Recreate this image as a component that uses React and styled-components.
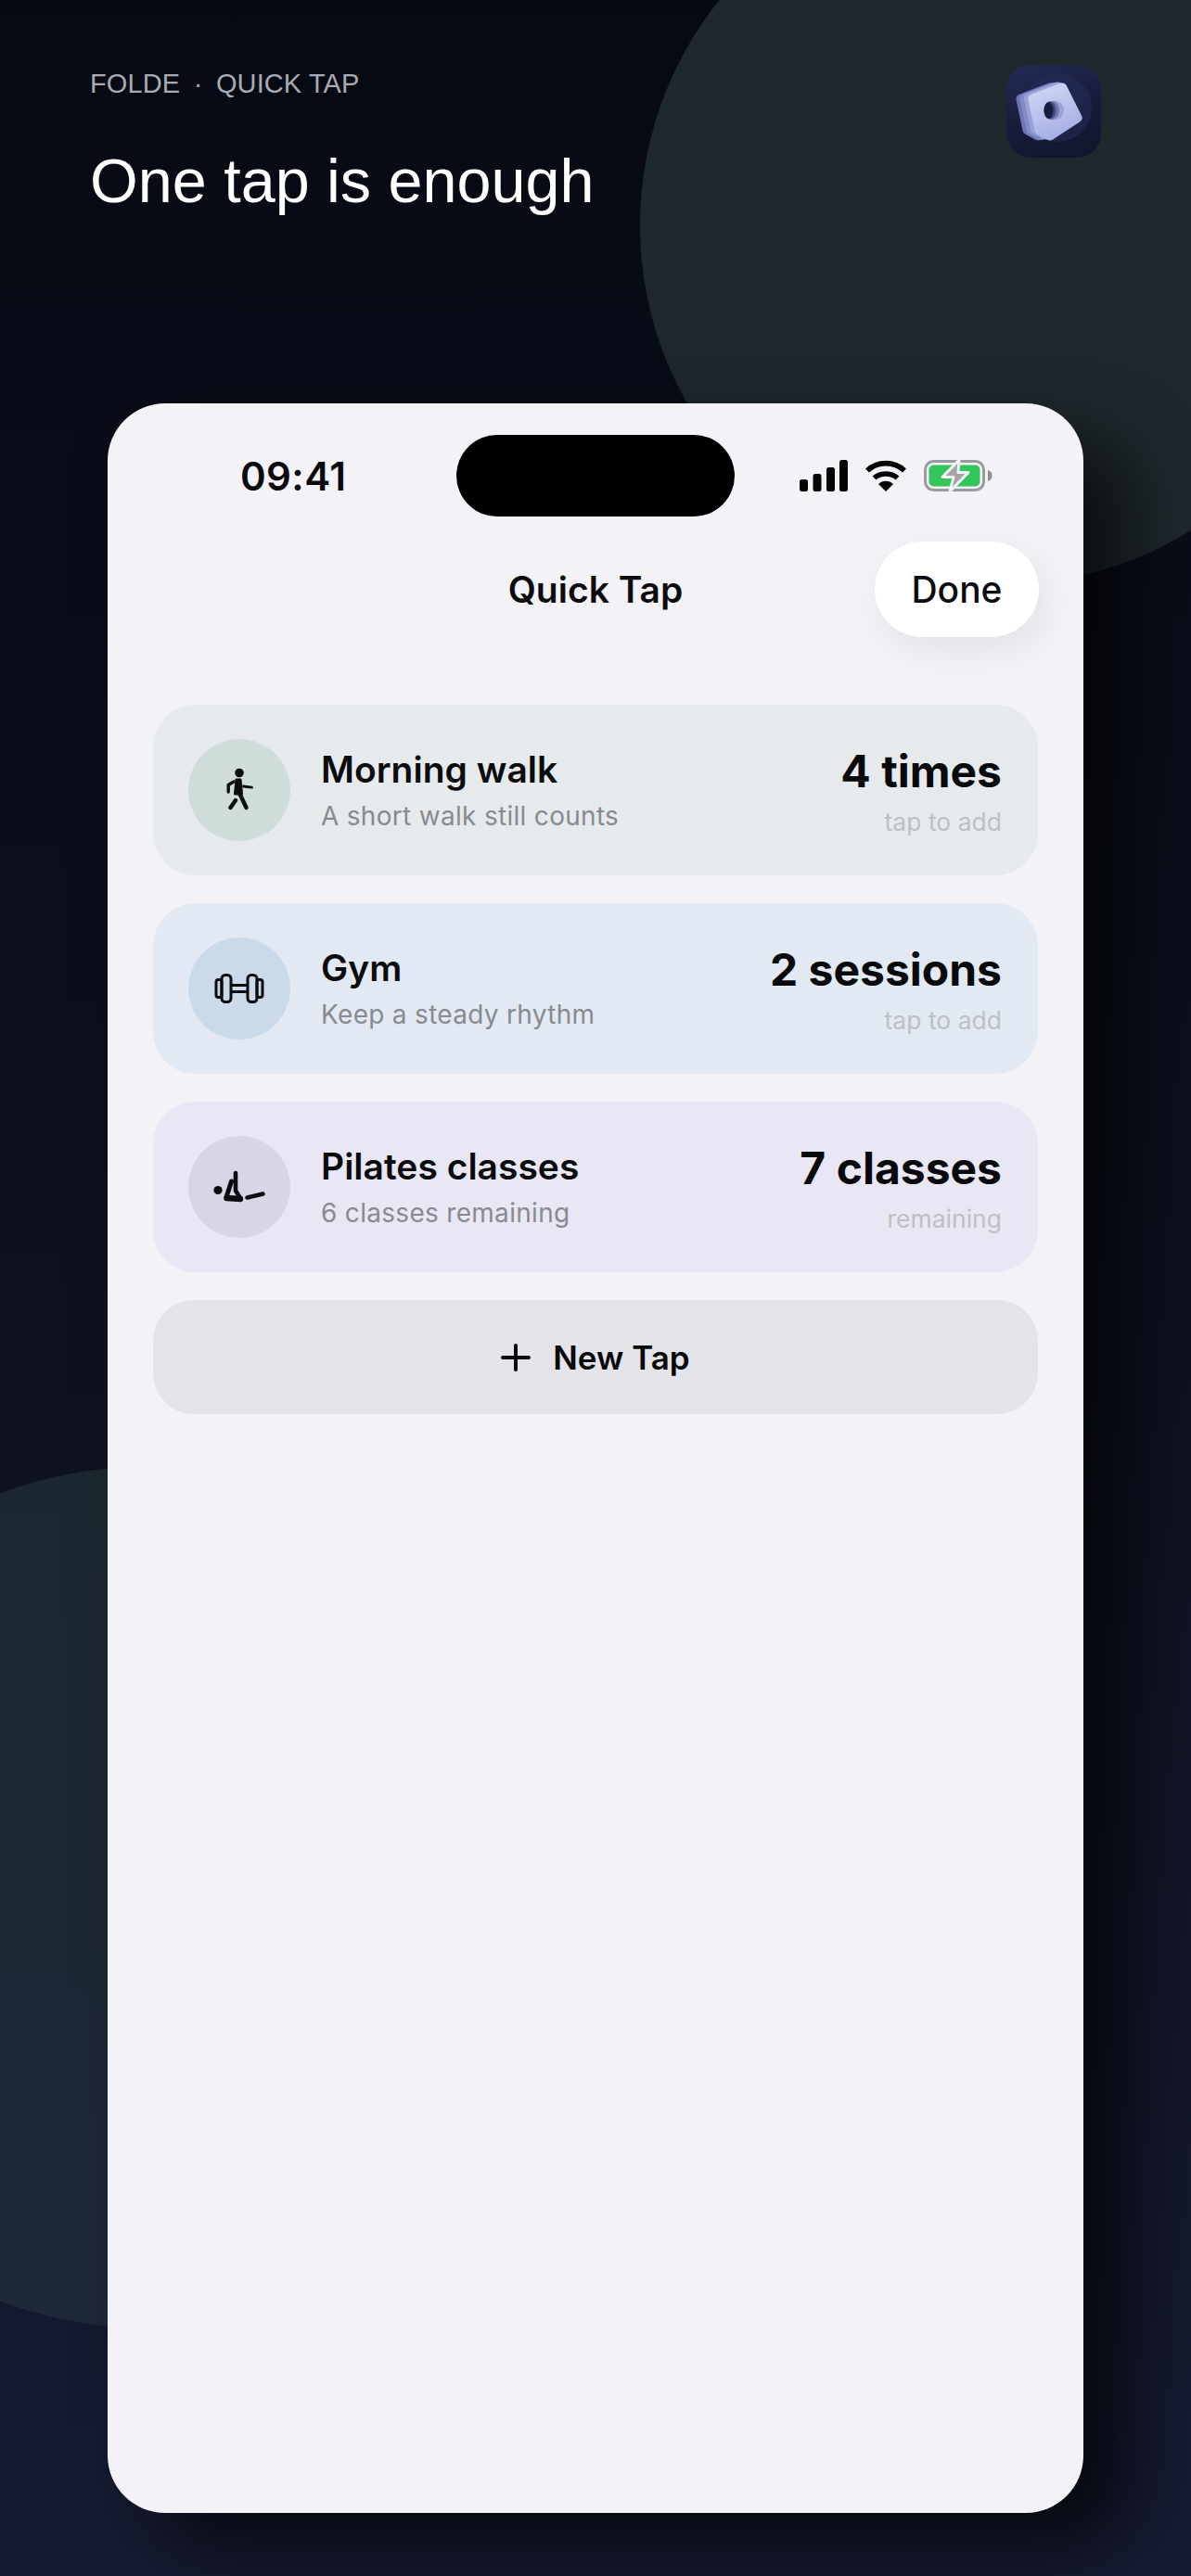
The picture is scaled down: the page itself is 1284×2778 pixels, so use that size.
import React from "react";
import styled, { createGlobalStyle } from "styled-components";

const GlobalStyle = createGlobalStyle`
  html, body {
    margin: 0;
    padding: 0;
    background: #0a0d16;
  }
`;

const Page = styled.div`
  position: relative;
  width: 1284px;
  height: 2778px;
  overflow: hidden;
  background: linear-gradient(180deg, #070a13 0%, #0d111e 50%, #161b31 100%);
`;

const Blob = styled.div`
  position: absolute;
  border-radius: 50%;
  left: ${(p) => p.$left}px;
  top: ${(p) => p.$top}px;
  width: ${(p) => p.$size}px;
  height: ${(p) => p.$size}px;
  background: ${(p) => p.$color};
`;

const Header = styled.header`
  position: relative;
  height: 435px;
  box-sizing: border-box;
  padding: 70px 97px 0 97px;
  display: flex;
  justify-content: space-between;
  align-items: flex-start;
`;

const HeaderText = styled.div`
  display: flex;
  flex-direction: column;
`;

const Eyebrow = styled.div`
  display: flex;
  font-family: "Liberation Sans", Arial, sans-serif;
  font-size: 29px;
  line-height: 40px;
  color: #a9abb2;
  letter-spacing: 0.1px;
`;

const Dot = styled.span`
  margin: 0 14.5px;
`;

const Title = styled.h1`
  margin: 45px 0 0;
  font-family: "Liberation Sans", Arial, sans-serif;
  font-size: 66.5px;
  line-height: 80px;
  font-weight: 400;
  color: #ffffff;
`;

const Logo = styled.div`
  position: relative;
  width: 102px;
  height: 100px;
  border-radius: 26px;
  background: linear-gradient(160deg, #242a55 0%, #171b3a 55%, #11142b 100%);
  overflow: hidden;
`;

const Phone = styled.main`
  position: relative;
  width: 1052px;
  height: 2275px;
  margin-left: 116px;
  box-sizing: border-box;
  border-radius: 62px;
  background: #f2f2f7;
  box-shadow: 50px 40px 80px rgba(0, 0, 0, 0.65);
  font-family: Inter, "Liberation Sans", sans-serif;
`;

const StatusBar = styled.div`
  display: grid;
  grid-template-columns: 376px 300px 1fr;
  height: 88px;
  padding-top: 34px;
  align-items: center;
`;

const Time = styled.div`
  justify-self: start;
  margin-left: 143px;
  font-size: 42px;
  font-weight: 600;
  color: #0b0b0d;
  letter-spacing: 0.4px;
`;

const Island = styled.div`
  height: 88px;
  border-radius: 44px;
  background: #000000;
`;

const StatusIcons = styled.div`
  display: flex;
  align-items: center;
  margin-left: 70px;
  gap: 18px;
`;

const Nav = styled.div`
  display: grid;
  grid-template-columns: 1fr auto 1fr;
  align-items: center;
  margin: 27px 48px 0;
  height: 103px;
`;

const NavTitle = styled.div`
  font-size: 39px;
  font-weight: 600;
  color: #0c0c0e;
`;

const DoneButton = styled.button`
  justify-self: end;
  width: 177px;
  height: 103px;
  border: 0;
  border-radius: 52px;
  background: #ffffff;
  box-shadow: 8px 14px 40px rgba(0, 0, 0, 0.07);
  font-family: inherit;
  font-size: 39px;
  font-weight: 500;
  color: #0c0c0e;
  padding: 0;
`;

const List = styled.div`
  display: flex;
  flex-direction: column;
  gap: 30px;
  margin: 73px 49px 0 49px;
`;

const Card = styled.div`
  display: flex;
  align-items: center;
  height: 184px;
  box-sizing: border-box;
  padding: 0 39px 0 38px;
  border-radius: 46px;
  background: ${(p) => p.$bg};
`;

const IconCircle = styled.div`
  flex: none;
  display: flex;
  align-items: center;
  justify-content: center;
  width: 110px;
  height: 110px;
  border-radius: 50%;
  background: ${(p) => p.$bg};
`;

const CardText = styled.div`
  flex: 1;
  margin-left: 33px;
`;

const CardTitle = styled.div`
  font-size: 39px;
  line-height: 50px;
  font-weight: 600;
  color: #0b0c0e;
`;

const CardSub = styled.div`
  margin-top: 6.5px;
  font-size: 28px;
  line-height: 38px;
  color: #878b90;
  letter-spacing: 0.3px;
`;

const CardValue = styled.div`
  text-align: right;
`;

const ValueMain = styled.div`
  margin-top: 7.5px;
  font-size: 48px;
  line-height: 50px;
  font-weight: 700;
  color: #08090b;
`;

const ValueHint = styled.div`
  margin-top: 10.5px;
  font-size: 26.5px;
  line-height: 38px;
  color: #bcc0c4;
`;

const NewTap = styled.button`
  display: flex;
  align-items: center;
  justify-content: center;
  gap: 24px;
  height: 123px;
  border: 0;
  border-radius: 44px;
  background: #e3e3e8;
  font-family: inherit;
  font-size: 35px;
  font-weight: 600;
  color: #08090b;
`;

const FoldeFace = ({ fill, dx = 0, dy = 0 }) => (
  <path
    d="M29 37L60 25L76 57L47 76L36 70Z"
    transform={`translate(${dx} ${dy})`}
    fill={fill}
    stroke={fill}
    strokeWidth="11"
    strokeLinejoin="round"
  />
);

const FoldeMark = () => (
  <svg width="102" height="100" viewBox="0 0 102 100">
    <defs>
      <linearGradient id="foldeFace" x1="0.2" y1="0" x2="0.6" y2="1">
        <stop offset="0%" stopColor="#ccd3f3" />
        <stop offset="100%" stopColor="#a7b0e6" />
      </linearGradient>
    </defs>
    <circle cx="55" cy="46" r="37" fill="#262b58" opacity="0.55" />
    <FoldeFace fill="#6d76b2" dx={-13} dy={0} />
    <FoldeFace fill="#838cc6" dx={-9} dy={-0.5} />
    <FoldeFace fill="#9aa3d8" dx={-4.5} dy={-1} />
    <FoldeFace fill="url(#foldeFace)" />
    <circle cx="51.5" cy="49" r="10.5" fill="#9aa2d6" />
    <ellipse cx="49" cy="49" rx="8" ry="10" fill="#6f77ad" />
    <ellipse cx="47" cy="49" rx="6.5" ry="9.5" fill="#454c80" />
    <ellipse cx="45.5" cy="49" rx="5" ry="9" fill="#1a1e3e" />
  </svg>
);

const SignalIcon = () => (
  <svg width="52" height="34" viewBox="0 0 52 34" fill="#050505">
    <rect x="0" y="21" width="9" height="13" rx="2.5" />
    <rect x="14.5" y="15" width="9" height="19" rx="2.5" />
    <rect x="29" y="8" width="9" height="26" rx="2.5" />
    <rect x="43" y="0" width="9" height="34" rx="2.5" />
  </svg>
);

const WifiIcon = () => (
  <svg width="46" height="34" viewBox="0 0 46 34" fill="none" stroke="#050505" strokeWidth="5.6">
    <path d="M3 11.5C14 1 32 1 43 11.5" />
    <path d="M10.5 19.5C17 13.5 29 13.5 35.5 19.5" />
    <path d="M15 26L23 34L31 26C27 21.5 19 21.5 15 26Z" fill="#050505" stroke="none" />
  </svg>
);

const BatteryIcon = () => (
  <svg width="74" height="36" viewBox="0 0 74 36">
    <rect x="1.5" y="2.5" width="63" height="31" rx="9" fill="none" stroke="#9a9b9e" strokeWidth="3" />
    <rect x="5.5" y="6.5" width="55" height="23" rx="5" fill="#34c65a" />
    <path d="M69 12C72 13 73.5 15 73.5 18C73.5 21 72 23 69 24Z" fill="#8d8e91" />
    <path
      d="M38 1L20 19.5H32L28 35L48 14.5H37Z"
      fill="#a3a5a8"
      stroke="#f2f2f7"
      strokeWidth="3"
      strokeLinejoin="round"
    />
  </svg>
);

const WalkIcon = () => (
  <svg width="60" height="60" viewBox="0 0 60 60" fill="none" stroke="#0b0c0d" strokeLinecap="round" strokeLinejoin="round">
    <circle cx="30" cy="11.5" r="4.8" fill="#0b0c0d" stroke="none" />
    <path d="M27 19H31L32.5 34H25.5Z" fill="#0b0c0d" strokeWidth="3" />
    <path d="M30 33L37.5 49" strokeWidth="4.4" />
    <path d="M26 41L20.5 49" strokeWidth="4.4" />
    <path d="M24 21L18.2 24.5V32" strokeWidth="3.4" />
    <path d="M34.5 26L43.5 27.2" strokeWidth="2.8" />
  </svg>
);

const DumbbellIcon = () => (
  <svg width="60" height="60" viewBox="0 0 60 60" fill="none" stroke="#0b0c0d" strokeWidth="3" strokeLinejoin="round">
    <rect x="5" y="20.5" width="6" height="19" rx="2.6" />
    <rect x="11" y="15.5" width="10" height="29" rx="4" />
    <rect x="39" y="15.5" width="10" height="29" rx="4" />
    <rect x="49" y="20.5" width="6" height="19" rx="2.6" />
    <path d="M21 26.5H39M21 33.5H39" />
  </svg>
);

const PilatesIcon = () => (
  <svg width="60" height="60" viewBox="0 0 60 60" fill="none" stroke="#0b0c0d" strokeLinecap="round" strokeLinejoin="round">
    <circle cx="7" cy="33.5" r="4.6" fill="#0b0c0d" stroke="none" />
    <path d="M26 15V34L31 42" strokeWidth="4.6" />
    <path d="M21.5 24L16 41" strokeWidth="5" />
    <path d="M16.5 42L31 43" strokeWidth="6.4" />
    <path d="M38.5 41.5L55.5 37.5" strokeWidth="4.6" />
  </svg>
);

const PlusIcon = () => (
  <svg width="32" height="30" viewBox="0 0 32 30" fill="none" stroke="#08090b" strokeWidth="4" strokeLinecap="round">
    <path d="M16 2V28M2 15H30" />
  </svg>
);

const cards = [
  {
    title: "Morning walk",
    sub: "A short walk still counts",
    value: "4 times",
    hint: "tap to add",
    bg: "#e7eaec",
    circle: "#cfdcd9",
    Icon: WalkIcon,
  },
  {
    title: "Gym",
    sub: "Keep a steady rhythm",
    value: "2 sessions",
    hint: "tap to add",
    bg: "#e2e9f2",
    circle: "#cbdae9",
    Icon: DumbbellIcon,
  },
  {
    title: "Pilates classes",
    sub: "6 classes remaining",
    value: "7 classes",
    hint: "remaining",
    bg: "#e9e7f3",
    circle: "#dad5e6",
    Icon: PilatesIcon,
  },
];

const App = () => {
  return (
    <Page>
      <GlobalStyle />
      <Blob $left={690} $top={-145} $size={776} $color="#1f282d" />
      <Blob $left={-302} $top={1581} $size={930} $color="linear-gradient(180deg, #1c272f 0%, #1f2839 100%)" />
      <Header>
        <HeaderText>
          <Eyebrow>
            FOLDE<Dot>·</Dot>QUICK TAP
          </Eyebrow>
          <Title>One tap is enough</Title>
        </HeaderText>
        <Logo>
          <FoldeMark />
        </Logo>
      </Header>
      <Phone>
        <StatusBar>
          <Time>09:41</Time>
          <Island />
          <StatusIcons>
            <SignalIcon />
            <WifiIcon />
            <BatteryIcon />
          </StatusIcons>
        </StatusBar>
        <Nav>
          <span />
          <NavTitle>Quick Tap</NavTitle>
          <DoneButton>Done</DoneButton>
        </Nav>
        <List>
          {cards.map(({ title, sub, value, hint, bg, circle, Icon }) => (
            <Card key={title} $bg={bg}>
              <IconCircle $bg={circle}>
                <Icon />
              </IconCircle>
              <CardText>
                <CardTitle>{title}</CardTitle>
                <CardSub>{sub}</CardSub>
              </CardText>
              <CardValue>
                <ValueMain>{value}</ValueMain>
                <ValueHint>{hint}</ValueHint>
              </CardValue>
            </Card>
          ))}
          <NewTap>
            <PlusIcon />
            New Tap
          </NewTap>
        </List>
      </Phone>
    </Page>
  );
};

export default App;
